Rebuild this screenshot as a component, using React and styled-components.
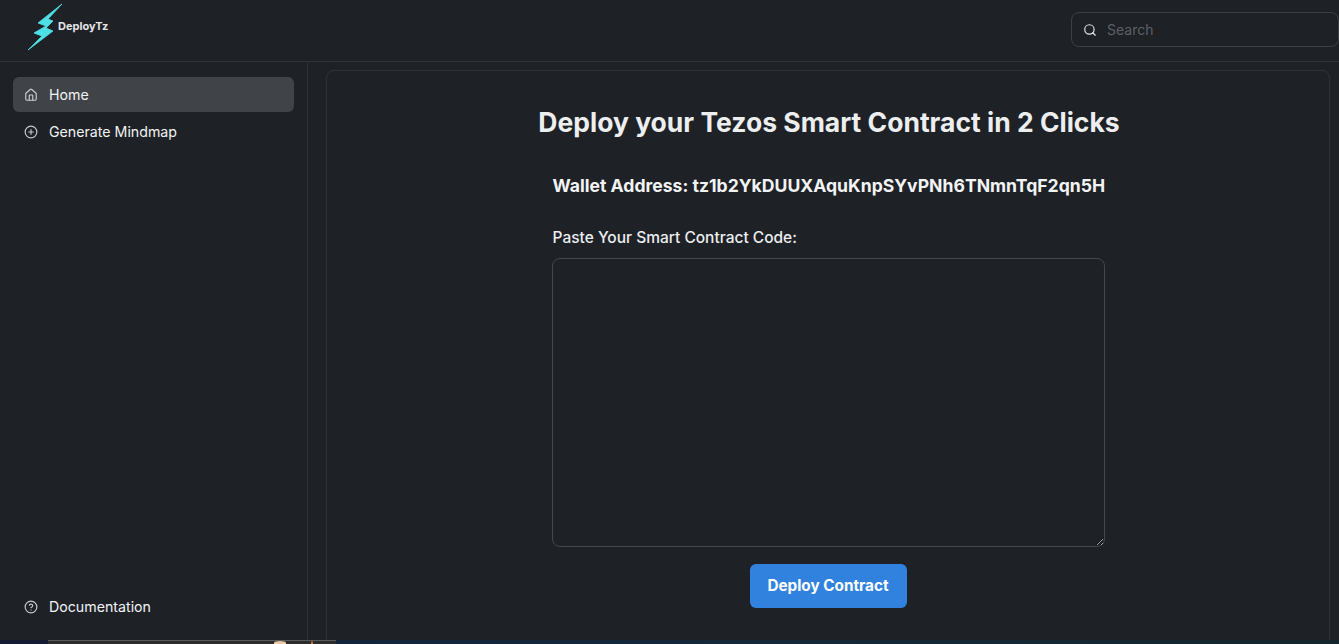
import styled, { createGlobalStyle } from "styled-components";
import { House, CirclePlus, CircleHelp, Search } from "lucide-react";

const GlobalStyle = createGlobalStyle`
  html, body {
    margin: 0;
    height: 100%;
    overflow: hidden;
    background: #1e2126;
  }
  * {
    box-sizing: border-box;
  }
`;

const Page = styled.div`
  height: 644px;
  display: flex;
  flex-direction: column;
  overflow: hidden;
  font-family: Inter, "Liberation Sans", sans-serif;
  color: #f2f3f5;
  color-scheme: dark;
`;

const Header = styled.header`
  flex: 0 0 62px;
  display: flex;
  align-items: flex-start;
  justify-content: space-between;
  border-bottom: 1px solid #2f3237;
`;

const Logo = styled.div`
  display: flex;
  align-items: flex-start;
  padding-left: 26px;
`;

const LogoName = styled.span`
  margin: 19px 0 0 -8px;
  font-size: 11px;
  line-height: 14px;
  font-weight: 700;
  color: #e4e5e6;
`;

const SearchBox = styled.label`
  width: 268px;
  height: 35px;
  margin-top: 12px;
  display: flex;
  align-items: center;
  gap: 10px;
  padding-left: 11px;
  border: 1px solid #3b3e43;
  border-radius: 8px;
  color: #e6e7e8;
`;

const SearchInput = styled.input`
  flex: 1;
  min-width: 0;
  padding: 0;
  border: 0;
  outline: 0;
  background: transparent;
  font: 400 14px Inter, sans-serif;
  color: #e6e7e8;

  &::placeholder {
    color: #5c6066;
    opacity: 1;
  }
`;

const Body = styled.div`
  flex: 0 0 578px;
  display: flex;
  min-height: 0;
`;

const Sidebar = styled.aside`
  flex: 0 0 308px;
  display: flex;
  flex-direction: column;
  justify-content: space-between;
  padding: 15px 13px 16px;
  border-right: 1px solid #2f3237;
`;

const Nav = styled.nav`
  display: flex;
  flex-direction: column;
  gap: 2px;
`;

const NavItem = styled.a`
  height: 35px;
  display: flex;
  align-items: center;
  gap: 11px;
  padding-left: 11px;
  border-radius: 6px;
  font-size: 14.2px;
  font-weight: 400;
  color: #f2f3f5;
  background: ${(p) => (p.$active ? "#404347" : "transparent")};

  svg {
    color: #c9cacc;
  }
`;

const Main = styled.main`
  flex: 1;
  min-width: 0;
  padding: 8px 9px 0 18px;
  overflow: hidden;
`;

const Card = styled.section`
  height: 600px;
  padding-top: 34px;
  display: flex;
  flex-direction: column;
  align-items: center;
  border: 1px solid #2f3237;
  border-radius: 8px;
`;

const Title = styled.h1`
  margin: 0 0 31px;
  padding-left: 2px;
  font-size: 26.5px;
  line-height: 35px;
  font-weight: 700;
  color: #edeef0;
`;

const Form = styled.form`
  width: 553px;
  display: flex;
  flex-direction: column;
  align-items: center;
`;

const Wallet = styled.h2`
  margin: 0 0 28px;
  padding-left: 1px;
  width: 100%;
  font-size: 17.6px;
  line-height: 29px;
  font-weight: 700;
  white-space: nowrap;
  color: #f2f3f5;
`;

const Label = styled.label`
  align-self: flex-start;
  margin-bottom: 10px;
  padding-left: 1px;
  font-size: 15.5px;
  line-height: 20px;
  font-weight: 500;
  color: #eceef0;
`;

const CodeArea = styled.textarea`
  display: block;
  width: 100%;
  height: 289px;
  margin-bottom: 17px;
  border: 1px solid #44474c;
  border-radius: 8px;
  background: transparent;
  outline: 0;
`;

const DeployButton = styled.button`
  width: 157px;
  height: 44px;
  padding: 0 0 2px;
  border: 0;
  border-radius: 6px;
  background: #3182de;
  color: #fff;
  font: 700 15.3px Inter, sans-serif;
`;

const DesktopStrip = styled.div`
  flex: 0 0 4px;
  display: flex;
  background: linear-gradient(90deg, #10203a 0%, #14283a 55%, #15262c 100%);
`;

const Spacer = styled.div`
  flex: 0 0 48px;
  background: #141b33;
`;

const Thumb = styled.div`
  flex: 0 0 288px;
  position: relative;
  border-top: 1px solid #5a5a5a;
  background: #2b2b2b;
`;

const ThumbSpot = styled.span`
  position: absolute;
  top: 0;
  left: ${(p) => p.$left}px;
  width: ${(p) => p.$width}px;
  height: 3px;
  border-radius: 50% 50% 0 0;
  background: ${(p) => p.$color};
`;

const Bolt = () => (
  <svg width="40" height="52" viewBox="26 0 40 52">
    <polygon
      fill="#4fdfe6"
      stroke="#4fdfe6"
      strokeWidth="0.8"
      strokeLinejoin="round"
      points="62,4 38,23 46,26 34,33 42,36 28,50 53,31 46,28 53,21 48,19"
    />
  </svg>
);

const App = () => {
  return (
    <Page>
      <GlobalStyle />
      <Header>
        <Logo>
          <Bolt />
          <LogoName>DeployTz</LogoName>
        </Logo>
        <SearchBox>
          <Search size={14} />
          <SearchInput placeholder="Search" />
        </SearchBox>
      </Header>
      <Body>
        <Sidebar>
          <Nav>
            <NavItem $active>
              <House size={14} />
              Home
            </NavItem>
            <NavItem>
              <CirclePlus size={14} />
              Generate Mindmap
            </NavItem>
          </Nav>
          <NavItem>
            <CircleHelp size={14} />
            Documentation
          </NavItem>
        </Sidebar>
        <Main>
          <Card>
            <Title>Deploy your Tezos Smart Contract in 2 Clicks</Title>
            <Form>
              <Wallet>Wallet Address: tz1b2YkDUUXAquKnpSYvPNh6TNmnTqF2qn5H</Wallet>
              <Label>Paste Your Smart Contract Code:</Label>
              <CodeArea />
              <DeployButton type="button">Deploy Contract</DeployButton>
            </Form>
          </Card>
        </Main>
      </Body>
      <DesktopStrip>
        <Spacer />
        <Thumb>
          <ThumbSpot $left={226} $width={12} $color="#e8c9a8" />
          <ThumbSpot $left={263} $width={2} $color="#c07a30" />
        </Thumb>
      </DesktopStrip>
    </Page>
  );
};

export default App;
